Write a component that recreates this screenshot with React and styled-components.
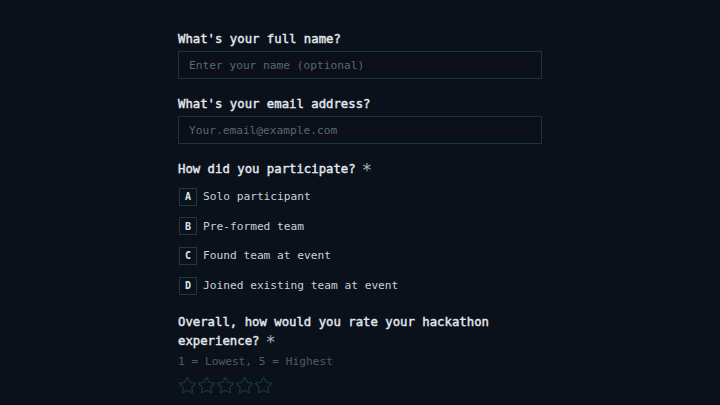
import React from 'react'
import styled, { createGlobalStyle } from 'styled-components'
import { Star } from 'lucide-react'

const GlobalStyle = createGlobalStyle`
    html, body {
        margin: 0;
        padding: 0;
        background: #0b111b;
    }
    body {
        font-family: "DejaVu Sans Mono", "Liberation Mono", monospace;
    }
`

const Page = styled.div`
    width: 720px;
    height: 405px;
    overflow: hidden;
    display: flex;
    justify-content: center;
    background: #0b111b;
`

const Form = styled.div`
    width: 364px;
    padding-top: 30px;
    display: flex;
    flex-direction: column;
`

const Field = styled.div`
    display: flex;
    flex-direction: column;
    margin-bottom: ${p => p.gap || 16}px;
`

const Question = styled.div`
    font-size: 12.3px;
    line-height: 19px;
    font-weight: 400;
    -webkit-text-stroke: 0.4px #e4e9ef;
    color: #e4e9ef;
`

const Required = styled.span`
    display: inline-block;
    color: #a9b2bc;
    -webkit-text-stroke: 0;
    font-size: 17px;
    line-height: 17px;
    vertical-align: top;
    margin-left: 6px;
    transform: translateY(2px);
`

const Hint = styled.div`
    font-size: 11.2px;
    line-height: 18px;
    color: #4e5b69;
    margin-top: 2px;
`

const Input = styled.input`
    margin-top: 2px;
    height: 28px;
    box-sizing: border-box;
    border: 1px solid #173540;
    background: #0a0f18;
    padding: 0 10px;
    font-family: inherit;
    font-size: 11.2px;
    color: #dfe5ea;
    outline: none;

    &::placeholder {
        color: #5a6774;
    }
`

const Options = styled.div`
    display: flex;
    flex-direction: column;
    gap: 11.7px;
    margin-top: 8.5px;
`

const Option = styled.div`
    display: flex;
    align-items: center;
    gap: 6px;
    height: 18px;
`

const Key = styled.span`
    width: 18px;
    height: 18px;
    box-sizing: border-box;
    border: 1px solid #1c3944;
    display: flex;
    align-items: center;
    justify-content: center;
    font-size: 10px;
    font-weight: 700;
    color: #dde3e9;
    margin-left: 1px;
`

const OptionText = styled.span`
    font-size: 11.2px;
    color: #c9d0d7;
`

const Stars = styled.div`
    display: flex;
    margin-top: 5px;
    color: #1b3a45;
`

const options = [
    ['A', 'Solo participant'],
    ['B', 'Pre-formed team'],
    ['C', 'Found team at event'],
    ['D', 'Joined existing team at event'],
]

function App() {
    return (
        <Page>
            <GlobalStyle />
            <Form>
                <Field>
                    <Question>What's your full name?</Question>
                    <Input placeholder="Enter your name (optional)" />
                </Field>

                <Field>
                    <Question>What's your email address?</Question>
                    <Input placeholder="Your.email@example.com" />
                </Field>

                <Field gap={18}>
                    <Question>
                        How did you participate?<Required>*</Required>
                    </Question>
                    <Options>
                        {options.map(([key, label]) => (
                            <Option key={key}>
                                <Key>{key}</Key>
                                <OptionText>{label}</OptionText>
                            </Option>
                        ))}
                    </Options>
                </Field>

                <Field>
                    <Question>
                        Overall, how would you rate your hackathon experience?<Required>*</Required>
                    </Question>
                    <Hint>1 = Lowest, 5 = Highest</Hint>
                    <Stars>
                        {[1, 2, 3, 4, 5].map(n => (
                            <Star key={n} size={19} strokeWidth={1.4} />
                        ))}
                    </Stars>
                </Field>
            </Form>
        </Page>
    )
}

export default App
